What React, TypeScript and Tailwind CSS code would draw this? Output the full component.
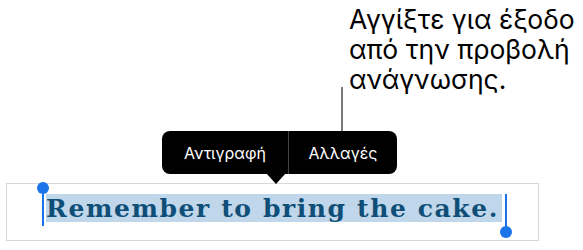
import React from "react";

const sans = { fontFamily: 'Inter, "Liberation Sans", Arial, sans-serif' };

export default function App() {
  return (
    <div className="w-[583px] h-[250px] bg-white overflow-hidden flex flex-col">
      <div className="pl-[349px] pt-[3.5px] text-[26.5px] leading-[30px] text-black" style={sans}>
        <div>Αγγίξτε για έξοδο</div>
        <div>από την προβολή</div>
        <div>ανάγνωσης.</div>
      </div>
      <div className="ml-[341px] mt-[-6.5px] w-[2px] h-[44px] bg-[#7a7a7a]" />

      <div className="ml-[162px] relative w-[235px] h-[43px]">
        <div className="flex h-full rounded-[8px] bg-black text-white text-[16px]" style={sans}>
          <div className="w-[126px] flex items-center justify-center">Αντιγραφή</div>
          <div className="w-[1px] bg-[#444]" />
          <div className="flex-1 flex items-center justify-center">Αλλαγές</div>
        </div>
        <div className="absolute left-[104px] top-[42px] w-0 h-0 border-l-[10px] border-r-[10px] border-t-[11px] border-l-transparent border-r-transparent border-t-black" />
      </div>

      <div className="ml-[6px] mt-[9px] w-[533px] h-[58px] border-[1.5px] border-[#d8d8d8] pl-[39px] pt-[9.5px]">
        <span className="relative inline-block">
          <span
            className="block h-[28px] w-[456px] bg-[#c0d6ea] text-[#0f4f77] font-bold text-[25px] leading-[29px] tracking-[1.6px] whitespace-nowrap"
            style={{ fontFamily: '"DejaVu Serif", "Liberation Serif", serif' }}
          >
            Remember to bring the cake.
          </span>
          <span className="absolute left-[-4px] top-[-6px] w-[2px] h-[38px] bg-[#1a73e8]" />
          <span className="absolute left-[-9px] top-[-12px] w-[12px] h-[12px] rounded-full bg-[#1a73e8]" />
          <span className="absolute left-[459px] top-0 w-[2px] h-[38px] bg-[#1a73e8]" />
          <span className="absolute left-[454px] top-[32px] w-[12px] h-[12px] rounded-full bg-[#1a73e8]" />
        </span>
      </div>
    </div>
  );
}
